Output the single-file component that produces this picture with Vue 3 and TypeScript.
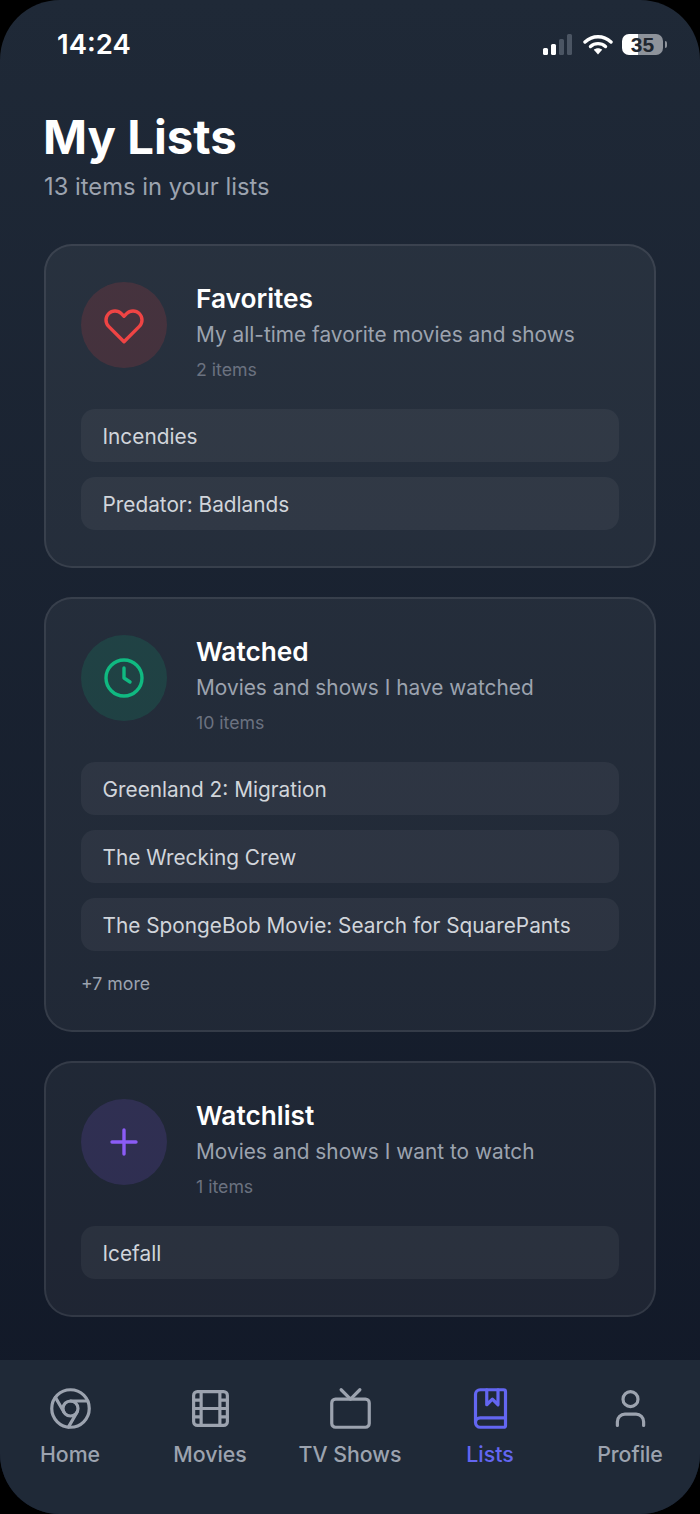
<script setup lang="ts">
interface ListCard {
  name: string
  desc: string
  count: string
  tone: string
  items: string[]
  more?: string
}
const cards: ListCard[] = [
  { name: 'Favorites', desc: 'My all-time favorite movies and shows', count: '2 items', tone: 'red', items: ['Incendies', 'Predator: Badlands'] },
  { name: 'Watched', desc: 'Movies and shows I have watched', count: '10 items', tone: 'green', items: ['Greenland 2: Migration', 'The Wrecking Crew', 'The SpongeBob Movie: Search for SquarePants'], more: '+7 more' },
  { name: 'Watchlist', desc: 'Movies and shows I want to watch', count: '1 items', tone: 'purple', items: ['Icefall'] },
]
const tabs = ['Home', 'Movies', 'TV Shows', 'Lists', 'Profile']
</script>

<template>
  <div class="phone">
    <div class="status">
      <span class="time">14:24</span>
      <div class="indicators">
        <svg width="32" height="21" viewBox="0 0 32 21">
          <rect x="1" y="14" width="5" height="7" rx="1.5" fill="#fff" />
          <rect x="9" y="10" width="5" height="11" rx="1.5" fill="#fff" />
          <rect x="17" y="5" width="5" height="16" rx="1.5" fill="#4b5563" />
          <rect x="25" y="0" width="5" height="21" rx="1.5" fill="#4b5563" />
        </svg>
        <svg width="30" height="21" viewBox="0 0 30 21">
          <path d="M2 8C9.500 1 20.500 1 28 8" fill="none" stroke="#fff" stroke-width="3.400" stroke-linecap="round" />
          <path d="M7.500 12.500C11.800 8.700 18.200 8.700 22.500 12.500" fill="none" stroke="#fff" stroke-width="3.400" stroke-linecap="round" />
          <path d="M10.800 15.800C13.200 13.800 16.800 13.800 19.200 15.800L15 20.500Z" fill="#fff" />
        </svg>
        <div class="battery">
          <div class="battery-body"><span>35</span></div>
          <div class="battery-tip"></div>
        </div>
      </div>
    </div>

    <main class="content">
      <h1>My Lists</h1>
      <p class="summary">13 items in your lists</p>

      <section v-for="card in cards" :key="card.name" class="card">
        <div class="card-head">
          <div class="badge" :class="card.tone">
            <svg v-if="card.tone === 'red'" width="48" height="48" viewBox="0 0 24 24" fill="none" stroke="#ef4444" stroke-width="1.700" stroke-linecap="round" stroke-linejoin="round">
              <path d="M4.318 6.318a4.500 4.500 0 0 0 0 6.364L12 20.364l7.682-7.682a4.500 4.500 0 0 0-6.364-6.364L12 7.636l-1.318-1.318a4.500 4.500 0 0 0-6.364 0Z" />
            </svg>
            <svg v-else-if="card.tone === 'green'" width="48" height="48" viewBox="0 0 24 24" fill="none" stroke="#10b981" stroke-width="1.700" stroke-linecap="round" stroke-linejoin="round">
              <circle cx="12" cy="12" r="9" />
              <path d="M12 7v5l3 2" />
            </svg>
            <svg v-else width="48" height="48" viewBox="0 0 24 24" fill="none" stroke="#8b5cf6" stroke-width="1.700" stroke-linecap="round">
              <path d="M12 6v12M6 12h12" />
            </svg>
          </div>
          <div class="card-text">
            <h2>{{ card.name }}</h2>
            <p class="desc">{{ card.desc }}</p>
            <p class="count">{{ card.count }}</p>
          </div>
        </div>
        <div class="items">
          <div v-for="item in card.items" :key="item" class="item">{{ item }}</div>
        </div>
        <p v-if="card.more" class="more">{{ card.more }}</p>
      </section>
    </main>

    <nav class="tabbar">
      <div v-for="tab in tabs" :key="tab" class="tab" :class="{ active: tab === 'Lists' }">
        <svg width="45" height="45" viewBox="0 0 24 24" fill="none" stroke="currentColor" stroke-width="1.700" stroke-linecap="round" stroke-linejoin="round">
          <template v-if="tab === 'Home'">
            <circle cx="12" cy="12" r="10" />
            <circle cx="12" cy="12" r="4" />
            <path d="M21.170 8H12M3.950 6.060 8.540 14M10.880 21.940 15.460 14" />
          </template>
          <template v-else-if="tab === 'Movies'">
            <rect x="3" y="3" width="18" height="18" rx="2" />
            <path d="M7 3v18M17 3v18M3 12h18M3 7.500h4M3 16.500h4M17 7.500h4M17 16.500h4" />
          </template>
          <template v-else-if="tab === 'TV Shows'">
            <rect x="2" y="7" width="20" height="15" rx="2" />
            <path d="M17 2l-5 5-5-5" />
          </template>
          <template v-else-if="tab === 'Lists'">
            <path d="M10 2v8l3-3 3 3V2" />
            <path d="M4 19.500v-15A2.500 2.500 0 0 1 6.500 2H19a1 1 0 0 1 1 1v18a1 1 0 0 1-1 1H6.500a1 1 0 0 1 0-5H20" />
          </template>
          <template v-else>
            <path d="M19 21v-2a4 4 0 0 0-4-4H9a4 4 0 0 0-4 4v2" />
            <circle cx="12" cy="7" r="4" />
          </template>
        </svg>
        <span>{{ tab }}</span>
      </div>
    </nav>
  </div>
</template>

<style>
html, body { margin: 0; background: #000; }
</style>

<style scoped>
.phone {
  width: 700px;
  height: 1514px;
  box-sizing: border-box;
  border-radius: 60px;
  overflow: hidden;
  display: flex;
  flex-direction: column;
  background: linear-gradient(180deg, #1f2937 0%, #111827 100%);
  font-family: Inter, "Liberation Sans", sans-serif;
}
.status {
  height: 88px;
  flex: none;
  box-sizing: border-box;
  padding: 0 33px 0 57px;
  display: flex;
  align-items: center;
  justify-content: space-between;
}
.time { color: #fff; font-size: 27.500px; font-weight: 600; }
.indicators { display: flex; align-items: center; gap: 9px; }
.battery { display: flex; align-items: center; gap: 2px; }
.battery-body {
  width: 41px;
  height: 21px;
  border-radius: 7px;
  background: linear-gradient(90deg, #fff 0 39%, #8e939b 39% 100%);
  color: #20262f;
  font-size: 21px;
  font-weight: 600;
  line-height: 21px;
  text-align: center;
  font-family: "Liberation Sans", sans-serif;
}
.battery-tip { width: 2px; height: 7px; border-radius: 0 2px 2px 0; background: #8e939b; }
.content {
  flex: 1;
  min-height: 0;
  padding: 15px 44px 0;
}
h1 {
  margin: 0 0 0 -1px;
  color: #fff;
  font-size: 47.300px;
  font-weight: 700;
  line-height: 67px;
}
.summary {
  margin: 0 0 40px;
  color: #9ca3af;
  font-size: 23.750px;
  line-height: 34px;
}
.card {
  margin-bottom: 29px;
  padding: 35px 35px 36px;
  border: 2px solid rgba(255, 255, 255, 0.09);
  border-radius: 28px;
  background: rgba(255, 255, 255, 0.05);
}
.card-head { display: flex; gap: 29px; margin-bottom: 22px; }
.badge {
  flex: none;
  width: 86px;
  height: 86px;
  margin-top: 1px;
  border-radius: 50%;
  display: flex;
  align-items: center;
  justify-content: center;
}
.red { background: rgba(239, 68, 68, 0.15); }
.green { background: rgba(16, 185, 129, 0.15); }
.purple { background: rgba(139, 92, 246, 0.15); }
.card-text { min-width: 0; }
h2 {
  margin: 1px 0 1px;
  color: #fff;
  font-size: 26.250px;
  font-weight: 600;
  line-height: 34px;
}
.desc {
  margin: 0;
  color: #9ca3af;
  font-size: 20.850px;
  line-height: 36px;
}
.count {
  margin: 0;
  color: #6b7280;
  font-size: 17.700px;
  line-height: 34px;
}
.items { display: flex; flex-direction: column; gap: 15px; }
.item {
  height: 53px;
  padding: 0 21.500px;
  border-radius: 14px;
  background: rgba(255, 255, 255, 0.05);
  color: #d1d5db;
  font-size: 20.800px;
  line-height: 55px;
}
.more {
  margin: 20px 0 -3px;
  color: #9ca3af;
  font-size: 17.700px;
  line-height: 26px;
}
.tabbar {
  flex: none;
  height: 154px;
  box-sizing: border-box;
  padding-top: 26px;
  display: grid;
  grid-template-columns: repeat(5, 140px);
  background: #1f2937;
}
.tab {
  display: flex;
  flex-direction: column;
  align-items: center;
  gap: 9px;
  color: #9ca3af;
  font-size: 21.300px;
  font-weight: 500;
  line-height: 28px;
}
.tab.active { color: #6366f1; }
</style>
